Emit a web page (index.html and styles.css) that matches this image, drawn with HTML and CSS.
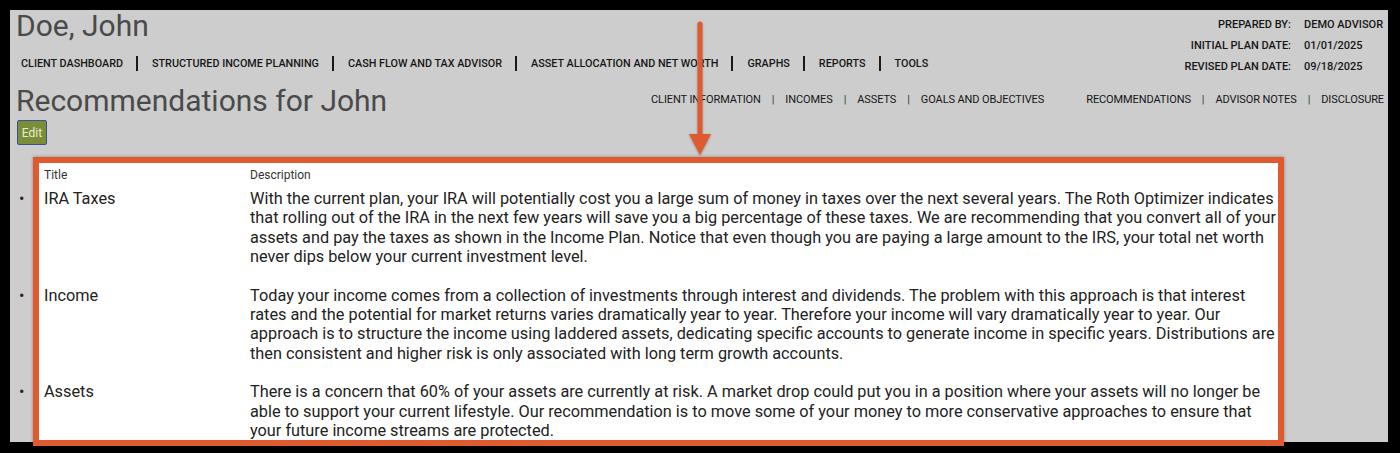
FILE: index.html
```html
<!DOCTYPE html>
<html lang="en">
<head>
<meta charset="utf-8">
<title>Recommendations for John</title>
<link rel="stylesheet" href="styles.css">
</head>
<body>
<div class="frame">
  <header class="top">
    <div class="top-left">
      <h1 class="client-name">Doe, John</h1>
      <ul class="main-nav">
        <li>CLIENT DASHBOARD</li>
        <li>STRUCTURED INCOME PLANNING</li>
        <li>CASH FLOW AND TAX ADVISOR</li>
        <li>ASSET ALLOCATION AND NET WORTH</li>
        <li>GRAPHS</li>
        <li>REPORTS</li>
        <li>TOOLS</li>
      </ul>
    </div>
    <dl class="plan-info">
      <div class="info-row"><dt>PREPARED BY:</dt><dd>DEMO ADVISOR</dd></div>
      <div class="info-row"><dt>INITIAL PLAN DATE:</dt><dd>01/01/2025</dd></div>
      <div class="info-row"><dt>REVISED PLAN DATE:</dt><dd>09/18/2025</dd></div>
    </dl>
  </header>

  <div class="title-row">
    <h2 class="page-title">Recommendations for John</h2>
    <nav class="sub-nav">
      <ul class="sub-group">
        <li>CLIENT INFORMATION</li>
        <li>INCOMES</li>
        <li>ASSETS</li>
        <li>GOALS AND OBJECTIVES</li>
      </ul>
      <ul class="sub-group">
        <li>RECOMMENDATIONS</li>
        <li>ADVISOR NOTES</li>
        <li>DISCLOSURE</li>
      </ul>
    </nav>
  </div>

  <button class="edit-btn" type="button">Edit</button>

  <section class="rec-box">
    <div class="rec-head">
      <span class="col-title">Title</span>
      <span class="col-desc">Description</span>
    </div>
    <ul class="rec-list">
      <li class="rec-item">
        <span class="col-title">IRA Taxes</span>
        <span class="col-desc">With the current plan, your IRA will potentially cost you a large sum of money in taxes over the next several years. The Roth Optimizer indicates that rolling out of the IRA in the next few years will save you a big percentage of these taxes. We are recommending that you convert all of your assets and pay the taxes as shown in the Income Plan. Notice that even though you are paying a large amount to the IRS, your total net worth never dips below your current investment level.</span>
      </li>
      <li class="rec-item">
        <span class="col-title">Income</span>
        <span class="col-desc">Today your income comes from a collection of investments through interest and dividends. The problem with this approach is that interest rates and the potential for market returns varies dramatically year to year. Therefore your income will vary dramatically year to year. Our approach is to structure the income using laddered assets, dedicating specific accounts to generate income in specific years. Distributions are then consistent and higher risk is only associated with long term growth accounts.</span>
      </li>
      <li class="rec-item">
        <span class="col-title">Assets</span>
        <span class="col-desc">There is a concern that 60% of your assets are currently at risk. A market drop could put you in a position where your assets will no longer be able to support your current lifestyle. Our recommendation is to move some of your money to more conservative approaches to ensure that your future income streams are protected.</span>
      </li>
    </ul>
  </section>

  <svg class="arrow" width="30" height="140" viewBox="0 0 30 140" aria-hidden="true">
    <line x1="15" y1="6" x2="15" y2="120" stroke="#e05a2f" stroke-width="5" stroke-linecap="round"/>
    <polygon points="4,116 26,116 15,137" fill="#e05a2f"/>
  </svg>
</div>
</body>
</html>
```

FILE: styles.css
```css
html, body {
  margin: 0;
  padding: 0;
}

body {
  background: #000;
  width: 1400px;
  height: 453px;
  overflow: hidden;
  font-family: Roboto, "Liberation Sans", Arial, sans-serif;
}

.frame {
  position: relative;
  margin: 10px 0 0 10px;
  width: 1378px;
  height: 432px;
  background: #cdcdcd;
  padding: 0 4px 0 6px;
  box-sizing: border-box;
}

/* ---------- header ---------- */
.top {
  display: flex;
  justify-content: space-between;
  align-items: flex-start;
}

.client-name {
  margin: 1px 0 0 0;
  font-size: 30px;
  line-height: 30px;
  font-weight: 400;
  color: #4a4a4a;
}

.main-nav {
  list-style: none;
  margin: 15px 0 0 5px;
  padding: 0;
  display: flex;
}

.main-nav li {
  font-size: 10.8px;
  font-weight: 500;
  line-height: 15px;
  color: #161616;
  padding: 0 13px 0 0;
}

.main-nav li + li {
  border-left: 2px solid #1a1a1a;
  padding-left: 14px;
}

.plan-info {
  margin: 4px 0 0 0;
  display: flex;
  flex-direction: column;
}

.info-row {
  display: flex;
  height: 21px;
  align-items: center;
  font-size: 11px;
  font-weight: 500;
  color: #161616;
}

.info-row dt {
  width: 150px;
  text-align: right;
}

.info-row dd {
  margin: 0 0 0 13px;
  width: 80px;
}

/* ---------- title row ---------- */
.title-row {
  display: flex;
  justify-content: space-between;
  align-items: flex-start;
  margin-top: 8px;
}

.page-title {
  margin: 0;
  font-size: 30px;
  line-height: 32px;
  font-weight: 400;
  color: #4a4a4a;
}

.sub-nav {
  display: flex;
  gap: 42px;
  margin-top: 7px;
}

.sub-group {
  list-style: none;
  margin: 0;
  padding: 0;
  display: flex;
}

.sub-group li {
  font-size: 11px;
  line-height: 15px;
  color: #161616;
  letter-spacing: -0.1px;
}

.sub-group li + li::before {
  content: "|";
  color: #333;
  margin: 0 11px 0 11px;
}

/* ---------- edit button ---------- */
.edit-btn {
  display: block;
  margin: 3px 0 0 1px;
  width: 30px;
  height: 25px;
  padding: 0;
  background: #7a8d38;
  border: 1px solid #3d4f96;
  border-radius: 2px;
  color: #e9ecd8;
  font-family: Roboto, "Liberation Sans", Arial, sans-serif;
  font-size: 12px;
}

/* ---------- recommendations box ---------- */
.rec-box {
  margin: 12px 0 0 17px;
  width: 1251px;
  height: 289px;
  box-sizing: border-box;
  border: 6px solid #e05a2f;
  background: #fff;
  padding: 5px 0 0 5px;
  box-shadow: 0 0 3px rgba(0, 0, 0, 0.35);
}

.rec-head {
  display: flex;
  font-size: 12px;
  line-height: 15px;
  color: #333;
}

.col-title {
  flex: 0 0 206px;
}

.col-desc {
  flex: 1 1 auto;
}

.rec-list {
  list-style: none;
  margin: 6px 0 0 0;
  padding: 0;
}

.rec-item {
  position: relative;
  display: flex;
  font-size: 16.3px;
  line-height: 19.33px;
  color: #222;
  padding-bottom: 19.33px;
}

.rec-item::before {
  content: "\2022";
  position: absolute;
  left: -25px;
  top: 0;
  font-size: 16px;
  color: #222;
}

/* ---------- annotation arrow ---------- */
.arrow {
  position: absolute;
  left: 675px;
  top: 8px;
  filter: drop-shadow(0 1px 1px rgba(0, 0, 0, 0.3));
}
```
